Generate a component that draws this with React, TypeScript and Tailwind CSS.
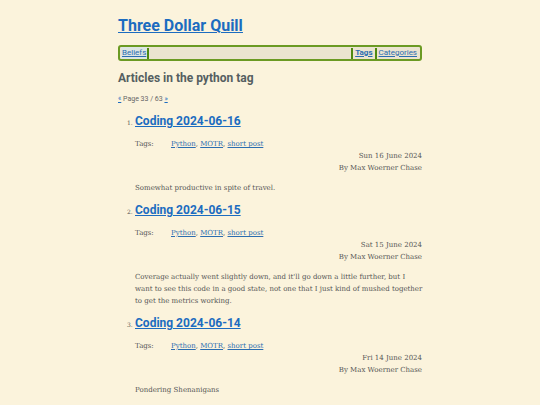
const posts = [
  {
    n: 1,
    title: 'Coding 2024-06-16',
    date: 'Sun 16 June 2024',
    summary: ['Somewhat productive in spite of travel.'],
  },
  {
    n: 2,
    title: 'Coding 2024-06-15',
    date: 'Sat 15 June 2024',
    summary: [
      "Coverage actually went slightly down, and it'll go down a little further, but I",
      'want to see this code in a good state, not one that I just kind of mushed together',
      'to get the metrics working.',
    ],
  },
  {
    n: 3,
    title: 'Coding 2024-06-14',
    date: 'Fri 14 June 2024',
    summary: ['Pondering Shenanigans'],
  },
];

const sans = "font-['Roboto','Noto_Sans',sans-serif]";
const serif = "font-['DejaVu_Serif','Liberation_Serif',serif]";

export default function App() {
  return (
    <div className="min-h-[405px] bg-[#fbf3dc]">
      <div className="mx-auto w-[304px] pt-[15px]">
        <h1 className={`${sans} text-[16px] font-bold leading-[22px] text-[#1c6cc0] underline`}>
          <a href="#">Three Dollar Quill</a>
        </h1>
        <nav
          className={`${sans} mt-[8px] flex h-[16px] items-center rounded-[3px] border-2 border-[#6b9a23] bg-[#ebe4d0] px-[1px] text-[8px] text-[#2b6db0]`}
        >
          <a href="#" className="bg-[#dde6e3] px-[1px] underline">Beliefs</a>
          <span className="h-[11px] w-[2px] bg-[#4f8a10]" />
          <span className="flex-1" />
          <span className="h-[11px] w-[2px] bg-[#4f8a10]" />
          <a href="#" className="px-[2px] font-bold underline">Tags</a>
          <span className="h-[11px] w-[2px] bg-[#4f8a10]" />
          <a href="#" className="px-[2px] underline">Categories</a>
        </nav>
        <h2 className={`${sans} mt-[9px] text-[12px] font-bold leading-[16px] text-[#555f61]`}>
          Articles in the python tag
        </h2>
        <p className={`${sans} mt-[8px] text-[7px] leading-[10px] text-[#666]`}>
          <a href="#" className="text-[#1c6cc0] underline">«</a> Page 33 / 63{' '}
          <a href="#" className="text-[#1c6cc0] underline">»</a>
        </p>
        <ol className="mt-[9px]">
          {posts.map((p) => (
            <li key={p.n} className="mb-[8px] pl-[17px]">
              <div className="flex items-baseline">
                <span className={`${serif} -ml-[8px] w-[8px] text-[6px] text-[#555]`}>{p.n}.</span>
                <a
                  href="#"
                  className={`${sans} text-[12px] font-bold leading-[16px] text-[#1c6cc0] underline`}
                >
                  {p.title}
                </a>
              </div>
              <div className={`${serif} mt-[9px] flex text-[7px] leading-[12px] text-[#555]`}>
                <span className="w-[36px]">Tags:</span>
                <span>
                  <a href="#" className="text-[#2b6db0] underline">Python</a>,{' '}
                  <a href="#" className="text-[#2b6db0] underline">MOTR</a>,{' '}
                  <a href="#" className="text-[#2b6db0] underline">short post</a>
                </span>
              </div>
              <div className={`${serif} text-right text-[7px] leading-[12px] text-[#555]`}>
                <div>{p.date}</div>
                <div>By Max Woerner Chase</div>
              </div>
              <div className={`${serif} mt-[8px] text-[7px] leading-[12px] text-[#555]`}>
                {p.summary.map((l) => (
                  <div key={l} className="whitespace-nowrap">{l}</div>
                ))}
              </div>
            </li>
          ))}
        </ol>
      </div>
    </div>
  );
}
